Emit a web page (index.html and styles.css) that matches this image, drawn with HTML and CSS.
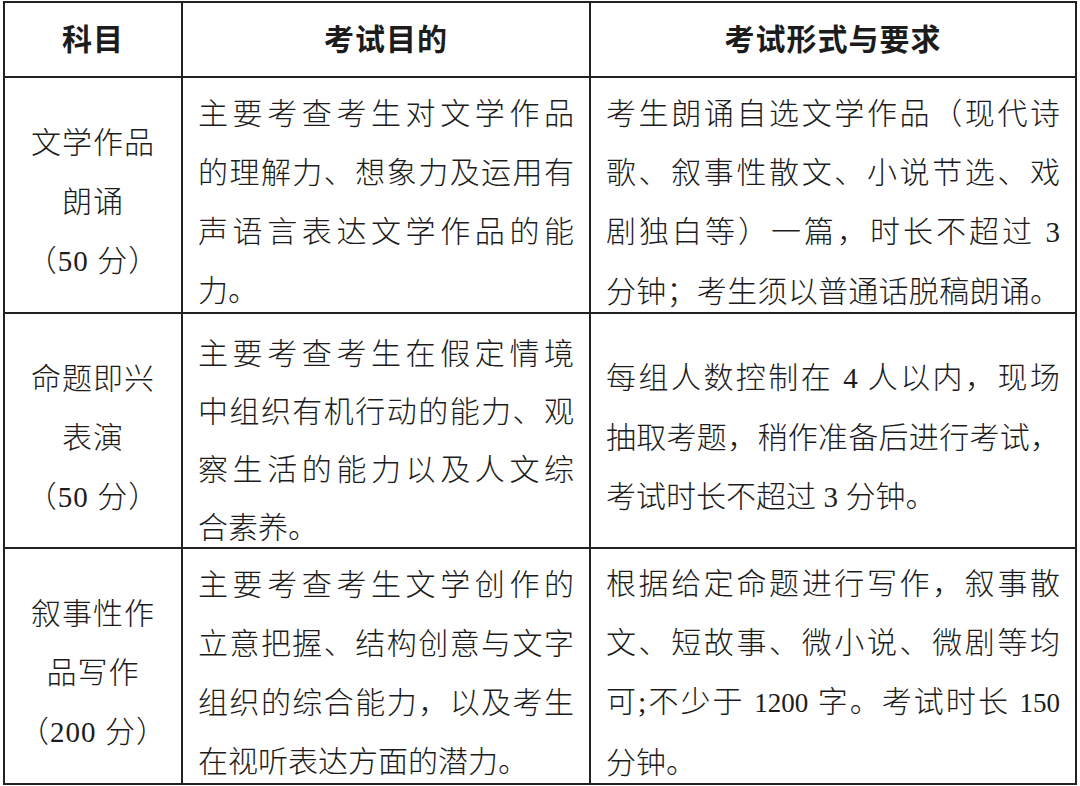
FILE: index.html
```html
<!DOCTYPE html>
<html lang="zh-CN">
<head>
<meta charset="utf-8">
<title>考试科目</title>
<link rel="stylesheet" href="styles.css">
</head>
<body>
<div class="table">
  <div class="cell head">科目</div>
  <div class="cell head">考试目的</div>
  <div class="cell head">考试形式与要求</div>

  <div class="cell subject">
    <span class="line">文学作品</span>
    <span class="line">朗诵</span>
    <span class="line">（<span class="num">50</span> 分）</span>
  </div>
  <div class="cell body">
    <span class="line full">主要考查考生对文学作品</span>
    <span class="line full">的理解力、想象力及运用有</span>
    <span class="line full">声语言表达文学作品的能</span>
    <span class="line">力。</span>
  </div>
  <div class="cell body">
    <span class="line full">考生朗诵自选文学作品（现代诗</span>
    <span class="line full">歌、叙事性散文、小说节选、戏</span>
    <span class="line full">剧独白等）一篇，时长不超过 <span class="num">3</span></span>
    <span class="line full">分钟；考生须以普通话脱稿朗诵。</span>
  </div>

  <div class="cell subject">
    <span class="line">命题即兴</span>
    <span class="line">表演</span>
    <span class="line">（<span class="num">50</span> 分）</span>
  </div>
  <div class="cell body tight">
    <span class="line full">主要考查考生在假定情境</span>
    <span class="line full">中组织有机行动的能力、观</span>
    <span class="line full">察生活的能力以及人文综</span>
    <span class="line">合素养。</span>
  </div>
  <div class="cell body">
    <span class="line full">每组人数控制在 <span class="num">4</span> 人以内，现场</span>
    <span class="line full">抽取考题，稍作准备后进行考试，</span>
    <span class="line">考试时长不超过 <span class="num">3</span> 分钟。</span>
  </div>

  <div class="cell subject">
    <span class="line">叙事性作</span>
    <span class="line">品写作</span>
    <span class="line">（<span class="num">200</span> 分）</span>
  </div>
  <div class="cell body">
    <span class="line full">主要考查考生文学创作的</span>
    <span class="line full">立意把握、结构创意与文字</span>
    <span class="line full">组织的综合能力，以及考生</span>
    <span class="line">在视听表达方面的潜力。</span>
  </div>
  <div class="cell body">
    <span class="line full">根据给定命题进行写作，叙事散</span>
    <span class="line full">文、短故事、微小说、微剧等均</span>
    <span class="line full squeeze">可;不少于 <span class="num">1200</span> 字。考试时长 <span class="num">150</span></span>
    <span class="line">分钟。</span>
  </div>
</div>
</body>
</html>
```

FILE: styles.css
```css
html, body {
  margin: 0;
  padding: 0;
  background: #ffffff;
}

body {
  width: 1080px;
  height: 786px;
  overflow: hidden;
  font-family: "Liberation Serif", "Noto Sans CJK SC", serif;
  color: #1c1c1c;
}

.table {
  margin: 1px 0 0 3px;
  width: 1074px;
  display: grid;
  grid-template-columns: 176px 406px 484px;
  grid-template-rows: 73px 234px 233px 234px;
  gap: 2px;
  padding: 2px;
  box-sizing: border-box;
  background: #222222;
}

.cell {
  background: #ffffff;
  display: flex;
  flex-direction: column;
  justify-content: center;
  box-sizing: border-box;
  font-size: 30px;
  line-height: 59px;
  font-weight: 300;
}

.head {
  align-items: center;
  font-weight: 700;
  font-size: 30px;
  letter-spacing: 1px;
  line-height: 40px;
}

.subject {
  align-items: center;
  padding-top: 14px;
  letter-spacing: 1px;
}

.body {
  padding: 14px 15px 0 15px;
}

.body.tight {
  padding-top: 20px;
  line-height: 58px;
}

.line {
  display: block;
  white-space: nowrap;
}

.subject .line {
  text-align: center;
}

.body .line {
  text-align: left;
}

.body .line.full {
  text-align: justify;
  text-align-last: justify;
}

.num {
  font-family: "Liberation Serif", serif;
  font-size: 29px;
}

.squeeze .num {
  font-size: 27px;
}
```
